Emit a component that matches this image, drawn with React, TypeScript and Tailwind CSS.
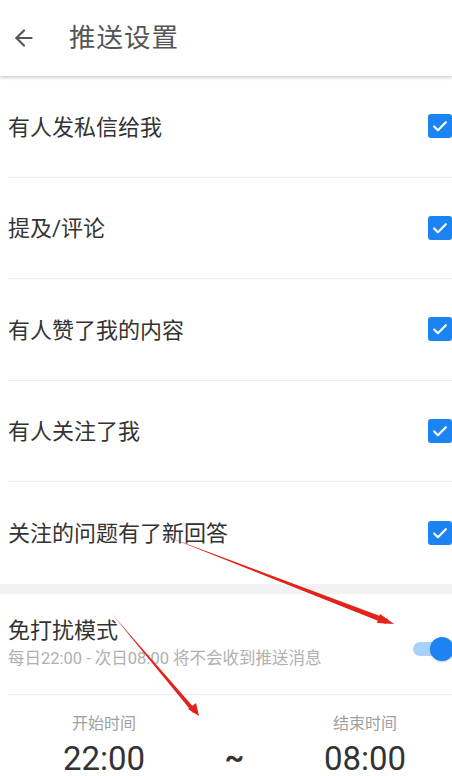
import { ArrowLeft } from 'lucide-react';

const items = ['有人发私信给我', '提及/评论', '有人赞了我的内容', '有人关注了我', '关注的问题有了新回答'];

function CheckBox() {
  return (
    <div className="w-6 h-6 rounded-[3px] bg-[#1b84f2] flex items-center justify-center shrink-0">
      <svg viewBox="0 0 24 24" className="w-5 h-5" fill="none" stroke="#fff" strokeWidth="2.6" strokeLinecap="round" strokeLinejoin="round">
        <path d="M5 12.5l4.5 4.5L19 7.5" />
      </svg>
    </div>
  );
}

export default function App() {
  return (
    <div className="relative w-[452px] h-[776px] overflow-hidden bg-white font-['Roboto','Noto_Sans_CJK_SC',sans-serif]">
      {/* 顶栏 */}
      <div className="relative z-10 h-[76px] bg-white flex items-center shadow-[0_2px_3px_rgba(0,0,0,0.18)]">
        <ArrowLeft className="ml-[11px] w-[26px] h-[26px] text-[#555]" strokeWidth={2} />
        <span className="ml-[32px] text-[26.5px] text-[#555] tracking-[1px]">推送设置</span>
      </div>

      {/* 推送项 */}
      <div className="pl-2">
        {items.map((t, i) => (
          <div key={t} className={`h-[101.5px] flex items-center justify-between ${i < items.length - 1 ? 'border-b border-[#eeeeee]' : ''}`}>
            <span className="text-[22px] text-[#333] mt-[2px]">{t}</span>
            <CheckBox />
          </div>
        ))}
      </div>

      <div className="h-[10px] bg-[#f2f2f5]" />

      {/* 免打扰 */}
      <div className="pl-2">
        <div className="h-[101px] flex items-center justify-between border-b border-[#eeeeee]">
          <div className="flex flex-col">
            <span className="text-[22px] text-[#333] leading-[28px]">免打扰模式</span>
            <span className="text-[16.5px] text-[#b0b0b0] leading-[22px] mt-[3px]">每日22:00 - 次日08:00 将不会收到推送消息</span>
          </div>
          <div className="relative w-[41px] h-[24px] shrink-0 mr-[-2px] mt-[10px]">
            <div className="absolute left-0 right-[4px] top-[5px] h-[14px] rounded-full bg-[#a9d2fb]" />
            <div className="absolute right-0 top-0 w-[24px] h-[24px] rounded-full bg-[#1b84f2] shadow-[0_1px_2px_rgba(0,0,0,0.2)]" />
          </div>
        </div>
      </div>

      <div className="flex items-start pt-[18px]">
        <div className="w-[208px] shrink-0 flex flex-col items-center">
          <span className="text-[16px] text-[#a0a0a0] leading-[22px]">开始时间</span>
          <span className="text-[33px] text-[#333] leading-[40px] mt-[4px]">22:00</span>
        </div>
        <div className="w-[53px] shrink-0 flex justify-center pt-[30px]">
          <span className="text-[30px] font-bold text-[#333] leading-[30px]">~</span>
        </div>
        <div className="w-[208px] shrink-0 flex flex-col items-center">
          <span className="text-[16px] text-[#a0a0a0] leading-[22px]">结束时间</span>
          <span className="text-[33px] text-[#333] leading-[40px] mt-[4px]">08:00</span>
        </div>
      </div>

      {/* 标注箭头 */}
      <svg className="absolute inset-0 pointer-events-none z-20" width="452" height="776" viewBox="0 0 452 776">
        <polygon points="163,535 388,619 386,624" fill="#e3221c" />
        <polygon points="394,624 380,614 377,623" fill="#e3221c" />
        <polygon points="112,614 196,710 193,713" fill="#e3221c" />
        <polygon points="199,716 196,703 188,709" fill="#e3221c" />
      </svg>
    </div>
  );
}
